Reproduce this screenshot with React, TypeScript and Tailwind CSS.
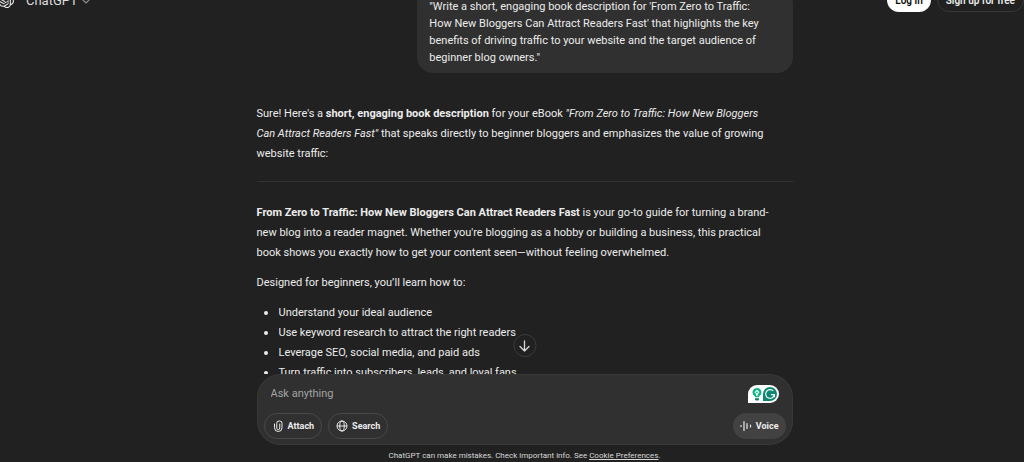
import type { ReactNode } from "react";

const bullets = [
  "Understand your ideal audience",
  "Use keyword research to attract the right readers",
  "Leverage SEO, social media, and paid ads",
  "Turn traffic into subscribers, leads, and loyal fans",
];

function OpenAILogo() {
  return (
    <svg viewBox="0 0 24 24" className="size-4 shrink-0" fill="currentColor" aria-hidden="true">
      <path d="M22.28 9.82a5.98 5.98 0 0 0-.52-4.91 6.05 6.05 0 0 0-6.51-2.9A6.07 6.07 0 0 0 4.98 4.18a5.98 5.98 0 0 0-4 2.9 6.05 6.05 0 0 0 .74 7.1 5.98 5.98 0 0 0 .51 4.91 6.05 6.05 0 0 0 6.51 2.9A5.98 5.98 0 0 0 13.26 24a6.06 6.06 0 0 0 5.77-4.21 5.99 5.99 0 0 0 4-2.9 6.06 6.06 0 0 0-.75-7.07zm-9.02 12.61a4.48 4.48 0 0 1-2.88-1.04l.14-.08 4.78-2.76a.79.79 0 0 0 .39-.68v-6.74l2.02 1.17a.07.07 0 0 1 .04.05v5.58a4.5 4.5 0 0 1-4.49 4.5zM3.6 18.3a4.47 4.47 0 0 1-.54-3.01l.14.08 4.78 2.76a.77.77 0 0 0 .78 0l5.84-3.37v2.33a.08.08 0 0 1-.03.06L9.74 19.95A4.5 4.5 0 0 1 3.6 18.3zM2.34 7.9A4.49 4.49 0 0 1 4.71 5.92V11.6a.77.77 0 0 0 .39.68l5.81 3.35-2.02 1.17a.08.08 0 0 1-.07 0l-4.83-2.79A4.5 4.5 0 0 1 2.34 7.87zm16.6 3.86L13.1 8.36l2.02-1.16a.08.08 0 0 1 .07 0l4.83 2.79a4.49 4.49 0 0 1-.68 8.1v-5.67a.79.79 0 0 0-.4-.67zm2.01-3.02l-.14-.09-4.77-2.78a.78.78 0 0 0-.79 0L9.41 9.23V6.9a.07.07 0 0 1 .03-.06l4.83-2.79a4.5 4.5 0 0 1 6.68 4.66zM8.31 12.86l-2.02-1.16a.08.08 0 0 1-.04-.06V6.07a4.5 4.5 0 0 1 7.38-3.45l-.14.08L8.7 5.46a.79.79 0 0 0-.39.68zm1.1-2.37L12 9l2.61 1.5v3L12 15l-2.6-1.5z" />
    </svg>
  );
}

function Chip({ children }: { children: ReactNode }) {
  return (
    <button
      type="button"
      className="flex h-[26px] items-center gap-1 rounded-full border border-[#484848] px-[7px] text-[9px] leading-3 font-bold text-[#ececec]"
    >
      {children}
    </button>
  );
}

function Header() {
  return (
    <header className="absolute inset-x-0 top-0 z-10 -mt-3 flex h-6 items-center justify-between">
      <div className="flex items-center gap-3">
        <div className="-ml-0.5">
          <OpenAILogo />
        </div>
        <button type="button" className="flex items-center gap-1 pt-0.5 text-[13px] leading-6 text-[#dedede]">
          ChatGPT
          <svg viewBox="0 0 10 10" className="size-2 text-[#8f8f8f]" fill="none" stroke="currentColor" strokeWidth="1.5" strokeLinecap="round" aria-hidden="true">
            <path d="M1 3.5 5 7.5 9 3.5" />
          </svg>
        </button>
      </div>
      <div className="flex items-center gap-1.5">
        <button type="button" className="h-6 rounded-full bg-white px-2 pt-0.5 text-[10px] leading-5 font-semibold text-[#0d0d0d]">
          Log in
        </button>
        <button type="button" className="h-6 rounded-full border border-[#383838] px-2 pt-0.5 text-[10px] leading-5 font-semibold text-[#ececec]">
          Sign up for free
        </button>
      </div>
    </header>
  );
}

function Conversation() {
  return (
    <main className="min-h-0 flex-1">
      <div className="-mt-3 ml-auto w-[70%] rounded-2xl bg-[#303030] px-3 pt-2.5 pb-[7px] leading-[17px]">
        <p>
          "Write a short, engaging book description for 'From Zero to Traffic:
          <br />
          How New Bloggers Can Attract Readers Fast' that highlights the key
          <br />
          benefits of driving traffic to your website and the target audience of
          <br />
          beginner blog owners."
        </p>
      </div>
      <article className="pt-[31px] leading-5">
        <p>
          Sure! Here's a <strong className="font-bold">short, engaging book description</strong> for your eBook{" "}
          <em>
            "From Zero to Traffic: How New Bloggers
            <br />
            Can Attract Readers Fast"
          </em>{" "}
          that speaks directly to beginner bloggers and emphasizes the value of growing
          <br />
          website traffic:
        </p>
        <hr className="mt-[17px] mb-[21px] border-[#333333]" />
        <p>
          <strong className="font-bold">From Zero to Traffic: How New Bloggers Can Attract Readers Fast</strong> is
          your go-to guide for turning a brand-
          <br />
          new blog into a reader magnet. Whether you're blogging as a hobby or building a business, this practical
          <br />
          book shows you exactly how to get your content seen—without feeling overwhelmed.
        </p>
        <p className="mt-2.5">Designed for beginners, you’ll learn how to:</p>
        <ul className="mt-2.5">
          {bullets.map((item) => (
            <li key={item} className="flex items-center">
              <span className="mx-[7px] size-1 rounded-full bg-[#ececec]" />
              <span className="ml-1">{item}</span>
            </li>
          ))}
        </ul>
      </article>
    </main>
  );
}

function GrammarlyBadge() {
  return (
    <div className="flex h-[18px] items-center gap-px rounded-t-full rounded-br-full bg-white pr-0.5 pl-1">
      <svg viewBox="0 0 18 24" className="h-3.5 w-[10px]" aria-hidden="true">
        <path d="M9 1a8 8 0 0 0-4.500 14.600L6 18h6l1.500-2.400A8 8 0 0 0 9 1z" fill="#12b38a" />
        <path d="M9 4.500 13.500 9 10.500 12v3h-3v-3L4.500 9z" fill="#fff" />
        <circle cx="9" cy="9" r="1.600" fill="#12b38a" />
        <path d="M5.500 19.500h7v2L11 23.500H7l-1.500-2z" fill="#0a7f6a" />
      </svg>
      <svg viewBox="0 0 24 24" className="size-3.5" aria-hidden="true">
        <path d="M12 0a12 12 0 1 1 0 24H0V12A12 12 0 0 1 12 0z" fill="#0c8571" />
        <path d="M17.500 6.800A7.500 7.500 0 1 0 19.500 13h-6M19.500 13v4.500" fill="none" stroke="#fff" strokeWidth="2" />
      </svg>
    </div>
  );
}

function Composer() {
  return (
    <form className="relative rounded-3xl bg-[#303030] px-[7px] pb-1.5 ring-1 ring-[#383838] ring-inset">
      <button
        type="button"
        aria-label="Scroll to bottom"
        className="absolute -top-10 left-1/2 flex size-[23px] -translate-x-1/2 items-center justify-center rounded-full border border-[#3c3c3c] bg-[#212121] text-[#d8d8d8]"
      >
        <svg viewBox="0 0 12 12" className="size-3" fill="none" stroke="currentColor" strokeWidth="1.300" strokeLinecap="round" strokeLinejoin="round" aria-hidden="true">
          <path d="M6 1v10M1.500 6.500 6 11l4.500-4.500" />
        </svg>
      </button>
      <div className="flex h-[39px] items-center gap-2 px-[7px]">
        <input
          type="text"
          aria-label="Ask anything"
          placeholder="Ask anything"
          className="min-w-0 flex-1 bg-transparent text-[11px] leading-5 outline-none placeholder:text-[#a3a3a3]"
        />
        <GrammarlyBadge />
      </div>
      <div className="flex items-center gap-1.5">
        <Chip>
          <svg viewBox="0 0 24 24" className="size-3" fill="none" stroke="currentColor" strokeWidth="2" strokeLinecap="round" aria-hidden="true">
            <path d="M15.500 8v8a3 3 0 0 1-6 0.500V7a4.500 4.500 0 0 1 4.500-5h1.500a4.500 4.500 0 0 1 4.500 5v8.500a7.500 7.500 0 0 1-15 0V8" />
          </svg>
          Attach
        </Chip>
        <Chip>
          <svg viewBox="0 0 24 24" className="size-3" fill="none" stroke="currentColor" strokeWidth="2" aria-hidden="true">
            <circle cx="12" cy="12" r="10" />
            <ellipse cx="12" cy="12" rx="4.500" ry="10" />
            <path d="M2 12h20" />
          </svg>
          Search
        </Chip>
        <button
          type="button"
          className="ml-auto flex h-[26px] items-center gap-1 rounded-full bg-[#424242] px-[7px] text-[9px] leading-3 font-bold text-[#ececec]"
        >
          <svg viewBox="0 0 12 12" className="size-3" fill="none" stroke="currentColor" strokeWidth="1.200" strokeLinecap="round" aria-hidden="true">
            <path d="M1 5.500v1M4 1.500v9M7 3.500v5M10.500 5v2" />
          </svg>
          Voice
        </button>
      </div>
    </form>
  );
}

export default function App() {
  return (
    <div className="relative h-screen overflow-hidden bg-[#212121] font-['Roboto','Liberation_Sans',sans-serif] text-[11px] text-[#ececec]">
      <Header />
      <div className="flex h-full justify-center pl-[25px]">
        <div className="flex w-full max-w-[536px] flex-col">
          <Conversation />
          <div className="relative bg-[#212121]">
            <Composer />
            <p className="pt-[5px] text-center text-[8px] leading-3 text-[#d8d8d8]">
              ChatGPT can make mistakes. Check important info. See{" "}
              <a href="#cookies" className="underline">
                Cookie Preferences
              </a>
              .
            </p>
          </div>
        </div>
      </div>
    </div>
  );
}
